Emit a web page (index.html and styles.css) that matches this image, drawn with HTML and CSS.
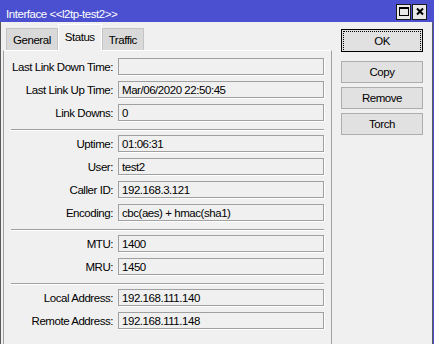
FILE: index.html
```html
<!DOCTYPE html>
<html>
<head>
    <meta charset="utf-8">
    <title>Interface &lt;&lt;l2tp-test2&gt;&gt;</title>
    <link rel="stylesheet" href="styles.css">
</head>
<body>
    <div class="titlebar">
        <span class="title">Interface &lt;&lt;l2tp-test2&gt;&gt;</span>
        <div class="title-btns">
            <span class="tbtn">
                <svg width="12" height="11" viewBox="0 0 12 11"><rect x="1.5" y="1.5" width="9" height="8" fill="none" stroke="#000" stroke-width="1"/><rect x="1" y="1" width="10" height="2" fill="#000"/></svg>
            </span>
            <span class="tbtn">
                <svg width="12" height="11" viewBox="0 0 12 11"><path d="M3 2.5 L9 8.5 M9 2.5 L3 8.5" stroke="#000" stroke-width="2"/></svg>
            </span>
        </div>
    </div>

    <div class="window">
        <div class="left">
            <div class="tabs">
                <div class="tab">General</div>
                <div class="tab active">Status</div>
                <div class="tab">Traffic</div>
            </div>

            <div class="panel">
                <div class="group">
                    <div class="row"><label>Last Link Down Time:</label><div class="field"></div></div>
                    <div class="row"><label>Last Link Up Time:</label><div class="field">Mar/06/2020 22:50:45</div></div>
                    <div class="row"><label>Link Downs:</label><div class="field">0</div></div>
                </div>
                <div class="sep"></div>
                <div class="group">
                    <div class="row"><label>Uptime:</label><div class="field">01:06:31</div></div>
                    <div class="row"><label>User:</label><div class="field">test2</div></div>
                    <div class="row"><label>Caller ID:</label><div class="field">192.168.3.121</div></div>
                    <div class="row"><label>Encoding:</label><div class="field">cbc(aes) + hmac(sha1)</div></div>
                </div>
                <div class="sep"></div>
                <div class="group">
                    <div class="row"><label>MTU:</label><div class="field">1400</div></div>
                    <div class="row"><label>MRU:</label><div class="field">1450</div></div>
                </div>
                <div class="sep"></div>
                <div class="group">
                    <div class="row"><label>Local Address:</label><div class="field">192.168.111.140</div></div>
                    <div class="row"><label>Remote Address:</label><div class="field">192.168.111.148</div></div>
                </div>
            </div>
        </div>

        <div class="side">
            <button class="btn ok"><span>OK</span></button>
            <button class="btn">Copy</button>
            <button class="btn">Remove</button>
            <button class="btn">Torch</button>
        </div>
    </div>
</body>
</html>
```

FILE: styles.css
```css
body {
    margin: 0;
    width: 434px;
    height: 344px;
    overflow: hidden;
    background: #4b50d0;
    font-family: 'Liberation Sans', Arial, sans-serif;
    font-size: 11.5px;
    letter-spacing: -0.45px;
    color: #000;
}

.titlebar {
    height: 22px;
    display: flex;
    align-items: center;
    justify-content: space-between;
    padding: 0 6px 0 6px;
    color: #fff;
}

.title {
    margin-top: 6px;
}

.title-btns {
    display: flex;
    gap: 1px;
    margin-top: 1px;
    margin-right: 1px;
}

.tbtn {
    width: 13px;
    height: 14px;
    border: 1px solid #1a1a1a;
    background: #e8e8e8;
    display: flex;
    align-items: center;
    justify-content: center;
}

.window {
    display: flex;
    height: 322px;
    margin-right: 1px;
    background: #f0f0f0;
    border-left: 1px solid #5a5a5a;
    border-right: 1px solid #5a5a5a;
}

.left {
    width: 329px;
    padding-left: 2px;
}

.tabs {
    display: flex;
    align-items: flex-end;
    height: 28px;
    padding-left: 3px;
}

.tab {
    height: 21px;
    line-height: 22px;
    padding: 0 6px;
    background: #d9d9d9;
    border: 1px solid #c4c4c4;
    border-bottom: none;
}

.tab.active {
    height: 26px;
    line-height: 24px;
    background: #f0f0f0;
    border-color: #ffffff;
    position: relative;
    top: 1px;
    padding: 0 6px;
}

.panel {
    border-top: 1px solid #ffffff;
    border-left: 1px solid #a0a0a0;
    border-right: 1px solid #a0a0a0;
    padding: 7px 7px 0 0;
    height: 300px;
}

.group {
    display: flex;
    flex-direction: column;
    gap: 6px;
}

.row {
    display: grid;
    grid-template-columns: 109px 206px;
    column-gap: 5px;
    align-items: center;
}

.row label {
    text-align: right;
    white-space: nowrap;
}

.field {
    height: 15px;
    line-height: 16px;
    padding-left: 3px;
    border: 1px solid #a0a0a0;
    box-shadow: 1px 1px 0 #ffffff;
    white-space: nowrap;
}

.sep {
    margin: 8px 0 4px 7px;
    height: 1px;
    background: #a0a0a0;
    border-bottom: 1px solid #ffffff;
}

.side {
    flex: 1;
    display: flex;
    flex-direction: column;
    align-items: flex-start;
    padding: 7px 0 0 9px;
}

.btn {
    width: 82px;
    height: 22px;
    margin-bottom: 4px;
    background: #e1e1e1;
    border: 1px solid #adadad;
    font-family: 'Liberation Sans', Arial, sans-serif;
    font-size: 11.5px;
    letter-spacing: -0.45px;
    color: #000;
    padding: 0;
}

.btn.ok {
    height: 23px;
    margin-bottom: 9px;
    border: 1px solid #000;
    padding: 1px;
}

.btn.ok span {
    display: block;
    height: 19px;
    line-height: 19px;
    border: 1px dotted #000;
}
```
